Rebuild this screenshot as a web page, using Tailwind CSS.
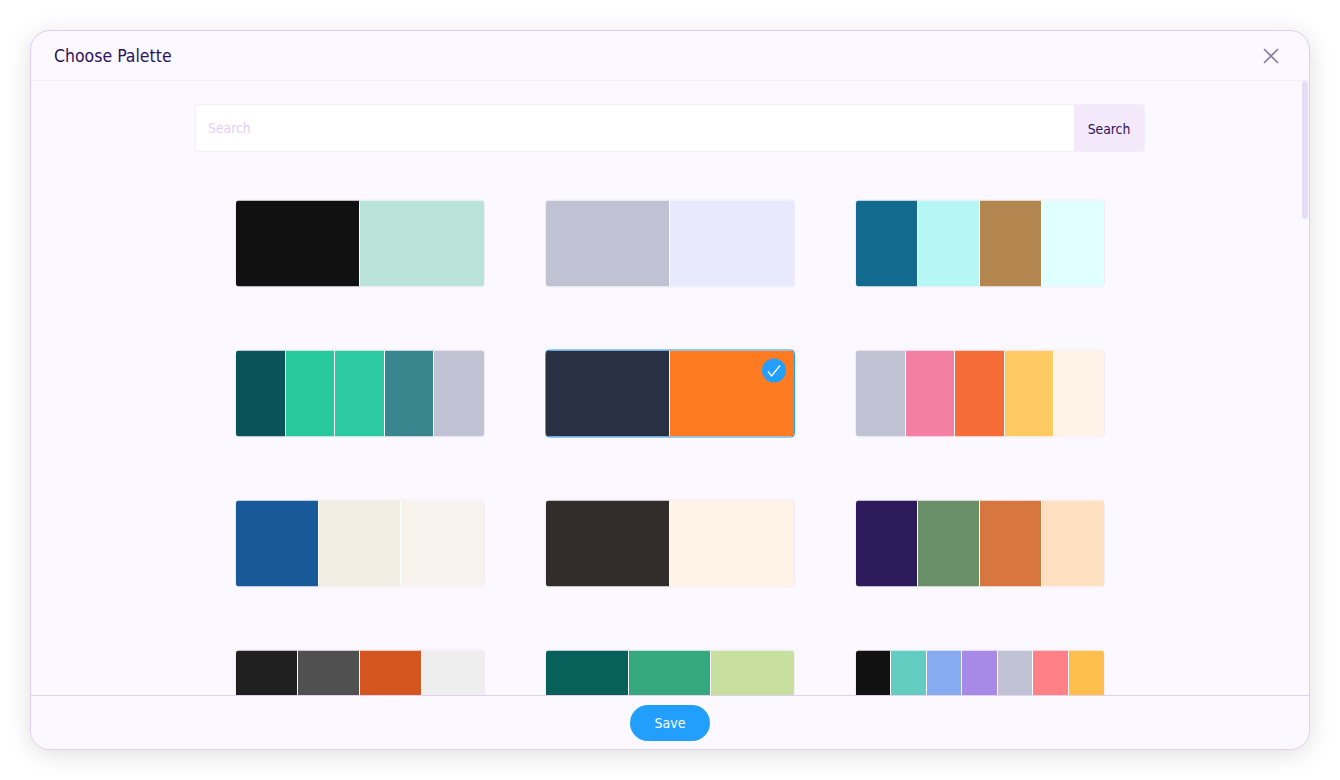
<!DOCTYPE html>
<html lang="en">
<head>
  <meta charset="UTF-8" />
  <title>Choose Palette</title>
  <script src="https://cdn.jsdelivr.net/npm/@tailwindcss/browser@4"></script>
</head>
<body class="bg-white h-[780px] overflow-hidden font-['DejaVu_Sans_Condensed','DejaVu_Sans',sans-serif]">
  <div class="p-[30px] h-[780px]">
    <div class="relative h-[720px] flex flex-col bg-[#fbf8ff] border border-[#dfcdf6] rounded-[20px] shadow-[0_4px_24px_rgba(0,0,0,0.13)] overflow-hidden">
      <!-- Header -->
      <header class="h-[50px] shrink-0 flex items-center justify-between pl-[23px] pr-[29px] border-b border-[#f4ecfb]">
        <h1 class="pt-[2px] text-[17.5px] text-[#2c1257]">Choose Palette</h1>
        <svg width="18" height="18" viewBox="0 0 18 18" fill="none" stroke="#8a7a9f" stroke-width="1.6"><path d="M2 2l14 14M16 2L2 16" /></svg>
      </header>

      <!-- Body -->
      <main class="relative flex-1 overflow-hidden pt-[23px]">
        <div class="absolute right-[1px] top-0 w-[6px] h-[138px] rounded-full bg-[#e7dcf7]"></div>

        <div class="w-[950px] h-[48px] mx-auto flex rounded border border-[#f4ecfb] overflow-hidden">
          <div class="flex-1 bg-white pl-3 flex items-center text-[13.8px] text-[#e2d0f5]">Search</div>
          <button class="w-[70px] pt-[2px] bg-[#f3e9fb] text-[13.8px] text-[#2c1257]">Search</button>
        </div>

        <div class="w-[870px] mx-auto mt-12 grid grid-cols-3 gap-x-[60px] gap-y-[62px] -translate-y-[0.5px]">
          <div class="h-[88px] grid grid-flow-col auto-cols-fr rounded overflow-hidden border border-[#f1ebf8] bg-white">
            <div class="border-r border-white bg-[#111111]"></div><div class="bg-[#bae3da]"></div>
          </div>
          <div class="h-[88px] grid grid-flow-col auto-cols-fr rounded overflow-hidden border border-[#f1ebf8] bg-white">
            <div class="border-r border-white bg-[#c1c1d4]"></div><div class="bg-[#e9e9fd]"></div>
          </div>
          <div class="h-[88px] grid grid-flow-col auto-cols-fr rounded overflow-hidden border border-[#f1ebf8] bg-white">
            <div class="border-r border-white bg-[#136a8f]"></div><div class="border-r border-white bg-[#b6f7f6]"></div><div class="border-r border-white bg-[#b3854f]"></div><div class="bg-[#e0ffff]"></div>
          </div>

          <div class="h-[88px] grid grid-flow-col auto-cols-fr rounded overflow-hidden border border-[#f1ebf8] bg-white">
            <div class="border-r border-white bg-[#0a5459]"></div><div class="border-r border-white bg-[#27c99c]"></div><div class="border-r border-white bg-[#2dc9a0]"></div><div class="border-r border-white bg-[#38858d]"></div><div class="bg-[#c1c1d4]"></div>
          </div>
          <div class="relative h-[88px] grid grid-flow-col auto-cols-fr rounded overflow-hidden border border-[#229ffd] bg-white">
            <div class="border-r border-white bg-[#2a3044]"></div><div class="bg-[#ff7b21]"></div>
            <div class="absolute right-[8px] top-[8px] w-6 h-6 rounded-full bg-[#229ffd] flex items-center justify-center">
              <svg width="14" height="13" viewBox="0 0 14 13" fill="none" stroke="#fff" stroke-width="1.3"><path d="M1 7l3.5 4.5L13 1" /></svg>
            </div>
          </div>
          <div class="h-[88px] grid grid-flow-col auto-cols-fr rounded overflow-hidden border border-[#f1ebf8] bg-white">
            <div class="border-r border-white bg-[#c1c1d4]"></div><div class="border-r border-white bg-[#f47fa4]"></div><div class="border-r border-white bg-[#f56c38]"></div><div class="border-r border-white bg-[#ffca63]"></div><div class="bg-[#fff3e7]"></div>
          </div>

          <div class="h-[88px] grid grid-flow-col auto-cols-fr rounded overflow-hidden border border-[#f1ebf8] bg-white">
            <div class="border-r border-white bg-[#185a99]"></div><div class="border-r border-white bg-[#f1ede2]"></div><div class="bg-[#f8f3ec]"></div>
          </div>
          <div class="h-[88px] grid grid-flow-col auto-cols-fr rounded overflow-hidden border border-[#f1ebf8] bg-white">
            <div class="border-r border-white bg-[#322d2b]"></div><div class="bg-[#fff2e7]"></div>
          </div>
          <div class="h-[88px] grid grid-flow-col auto-cols-fr rounded overflow-hidden border border-[#f1ebf8] bg-white">
            <div class="border-r border-white bg-[#2c1a5a]"></div><div class="border-r border-white bg-[#6a9069]"></div><div class="border-r border-white bg-[#d7773f]"></div><div class="bg-[#ffe1c2]"></div>
          </div>

          <div class="h-[88px] grid grid-flow-col auto-cols-fr rounded overflow-hidden border border-[#f1ebf8] bg-white">
            <div class="border-r border-white bg-[#202020]"></div><div class="border-r border-white bg-[#505050]"></div><div class="border-r border-white bg-[#d4561e]"></div><div class="bg-[#eeeeee]"></div>
          </div>
          <div class="h-[88px] grid grid-flow-col auto-cols-fr rounded overflow-hidden border border-[#f1ebf8] bg-white">
            <div class="border-r border-white bg-[#07605a]"></div><div class="border-r border-white bg-[#35a87e]"></div><div class="bg-[#c7e09f]"></div>
          </div>
          <div class="h-[88px] grid grid-flow-col auto-cols-fr rounded overflow-hidden border border-[#f1ebf8] bg-white">
            <div class="border-r border-white bg-[#111111]"></div><div class="border-r border-white bg-[#63ccc0]"></div><div class="border-r border-white bg-[#86abf0]"></div><div class="border-r border-white bg-[#a78ae8]"></div><div class="border-r border-white bg-[#c1c1d4]"></div><div class="border-r border-white bg-[#ff8087]"></div><div class="bg-[#ffbf4d]"></div>
          </div>
        </div>
      </main>

      <!-- Footer -->
      <footer class="h-[54px] shrink-0 flex items-center justify-center border-t border-[#e2d0ec] bg-[#fbf8ff]">
        <button class="w-20 h-9 pt-px rounded-full bg-[#229ffd] text-[14px] text-white">Save</button>
      </footer>
    </div>
  </div>
</body>
</html>
